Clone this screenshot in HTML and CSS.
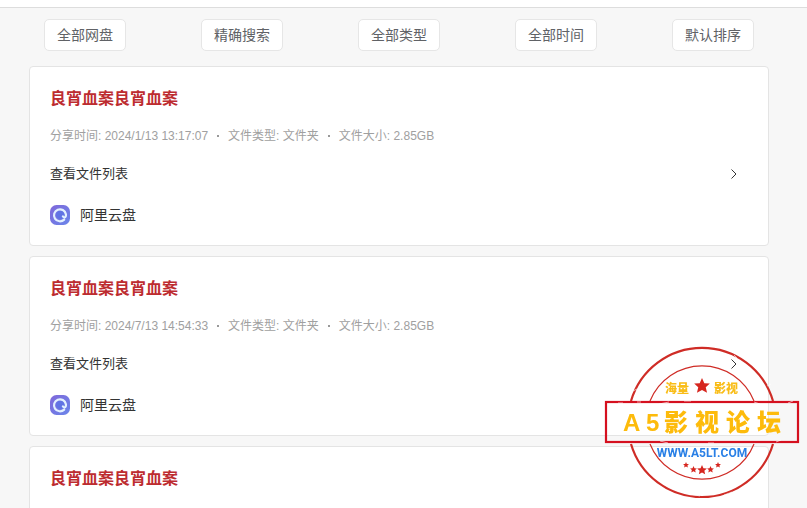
FILE: index.html
```html
<!DOCTYPE html>
<html lang="zh-CN">
<head>
<meta charset="utf-8">
<meta name="viewport" content="width=device-width, initial-scale=1">
<title>良宵血案</title>
<link rel="stylesheet" href="styles.css">
</head>
<body>
<svg class="defs" aria-hidden="true">
  <defs>
    <linearGradient id="drive-bg" x1="0" y1="0" x2="1" y2="1">
      <stop offset="0" stop-color="#8068da"/>
      <stop offset="1" stop-color="#6a86ea"/>
    </linearGradient>
    <symbol id="drive" viewBox="0 0 20 20">
      <rect width="20" height="20" rx="6.500" fill="url(#drive-bg)"/>
      <circle cx="10.300" cy="9.700" r="4.200" fill="#6074e4"/>
      <path d="M14.200 14.600A6 6 0 1 1 15.900 9.200c.2 1.700-.2 3.200-1.300 3.200-.8 0-1.300-.4-1.700-1" fill="none" stroke="#e2f1ff" stroke-width="2.200" stroke-linecap="round"/>
    </symbol>
    <symbol id="chevron" viewBox="0 0 12 12">
      <path d="M3.500 1.500 8 6l-4.500 4.500" fill="none" stroke="#333" stroke-width="1"/>
    </symbol>
    <symbol id="star" viewBox="-10 -10 20 20">
      <path d="M0-10 2.900-3.300 9.800-3.100 4.700 1.500 6.300 8.500 0 4.900-6.300 8.500-4.700 1.500-9.800-3.100-2.900-3.300Z" fill="#d6261f"/>
    </symbol>
  </defs>
</svg>

<header class="topbar"></header>

<main class="page">
  <nav class="filters">
    <button type="button">全部网盘</button>
    <button type="button">精确搜索</button>
    <button type="button">全部类型</button>
    <button type="button">全部时间</button>
    <button type="button">默认排序</button>
  </nav>

  <div class="results">
    <article class="card">
      <h2>良宵血案良宵血案</h2>
      <p class="meta"><span>分享时间: 2024/1/13 13:17:07</span><i></i><span>文件类型: 文件夹</span><i></i><span>文件大小: 2.85GB</span></p>
      <a class="files" href="#">查看文件列表<svg><use href="#chevron"/></svg></a>
      <div class="source"><svg><use href="#drive"/></svg>阿里云盘</div>
    </article>
    <article class="card">
      <h2>良宵血案良宵血案</h2>
      <p class="meta"><span>分享时间: 2024/7/13 14:54:33</span><i></i><span>文件类型: 文件夹</span><i></i><span>文件大小: 2.85GB</span></p>
      <a class="files" href="#">查看文件列表<svg><use href="#chevron"/></svg></a>
      <div class="source"><svg><use href="#drive"/></svg>阿里云盘</div>
    </article>
    <article class="card">
      <h2>良宵血案良宵血案</h2>
    </article>
  </div>
</main>

<svg class="stamp" viewBox="0 0 196 152">
  <g fill="none" stroke="#cf2c26">
    <path d="M27 55A74 74 0 0 1 169 55M27 98A74 74 0 0 0 169 98" stroke-width="2.200"/>
    <path d="M46 55A56 56 0 0 1 150 55M46 98A56 56 0 0 0 150 98" stroke-width="1.200"/>
  </g>
  <rect x="2" y="56" width="192" height="40" fill="none" stroke="#d5101f" stroke-width="2.200"/>
  <path d="M29 45l4-2M130 9l3 3M163 40l4-2M86 148l10 2M120 149l8-3M33 56h4M55 58l10-2M80 55h7M150 56l6 2M184 57l5-2M56 95l8 2M104 97h6M172 96l5-2M14 57h5" stroke="#fff" stroke-width="1" opacity=".6"/>
  <use href="#star" x="90" y="32" width="16" height="16"/>
  <g class="stamp-small">
    <text x="61" y="47">海量</text>
    <text x="110" y="47">影视</text>
  </g>
  <text class="stamp-name" y="85" x="19 42 60 91 122 153">A5影视论坛</text>
  <text class="stamp-url" x="98" y="111" text-anchor="middle">WWW.A5LT.COM</text>
  <use href="#star" x="79" y="116" width="6" height="6"/>
  <use href="#star" x="86" y="120" width="7" height="7"/>
  <use href="#star" x="93" y="119" width="10" height="10"/>
  <use href="#star" x="103" y="120" width="7" height="7"/>
  <use href="#star" x="111" y="116" width="6" height="6"/>
</svg>
</body>
</html>
```

FILE: styles.css
```css
* {
  box-sizing: border-box;
}

body {
  margin: 0;
  background: #f7f7f7;
  color: #333;
  font-family: "Liberation Sans", "Noto Sans CJK SC", sans-serif;
  font-size: 14px;
  line-height: 20px;
}

.defs {
  position: absolute;
  width: 0;
  height: 0;
}

.topbar {
  height: 8px;
  background: #fff;
  border-bottom: 1px solid #ddd;
}

.page {
  margin: 0 38px 0 29px;
}

.filters {
  display: flex;
  justify-content: space-between;
  padding: 11px 15px 15px;
}

.filters button {
  height: 32px;
  padding: 0 12px;
  background: #fff;
  border: 1px solid #e6e6e6;
  border-radius: 5px;
  color: #606266;
  font: inherit;
}

.results {
  display: grid;
  gap: 10px;
}

.card {
  padding: 20px;
  background: #fff;
  border: 1px solid #e4e4e4;
  border-radius: 4px;
}

.card h2 {
  margin: 0 0 15px;
  color: #bd2c30;
  font-size: 16px;
  line-height: 24px;
}

.meta {
  display: flex;
  align-items: center;
  margin: 0 0 18px;
  color: #a0a0a0;
  font-size: 12px;
}

.meta i {
  width: 2px;
  height: 2px;
  margin: 0 9px;
  background: #999;
}

.files {
  display: flex;
  align-items: center;
  justify-content: space-between;
  margin-bottom: 21px;
  padding-right: 8px;
  color: #333;
  font-size: 13px;
  text-decoration: none;
}

.files svg {
  width: 12px;
  height: 12px;
}

.source {
  display: flex;
  align-items: center;
  gap: 10px;
}

.source svg {
  width: 20px;
  height: 20px;
}

.stamp {
  position: fixed;
  right: 7px;
  bottom: 10px;
  width: 196px;
  height: 152px;
}

.stamp-small {
  fill: #f9bd18;
  font-size: 12px;
  font-weight: 900;
}

.stamp-name {
  fill: #fdbb0b;
  font-size: 24px;
  font-weight: 900;
}

.stamp-url {
  fill: #2a80e6;
  font-family: Roboto, "Liberation Sans", sans-serif;
  font-size: 12px;
  font-weight: 700;
}
```
